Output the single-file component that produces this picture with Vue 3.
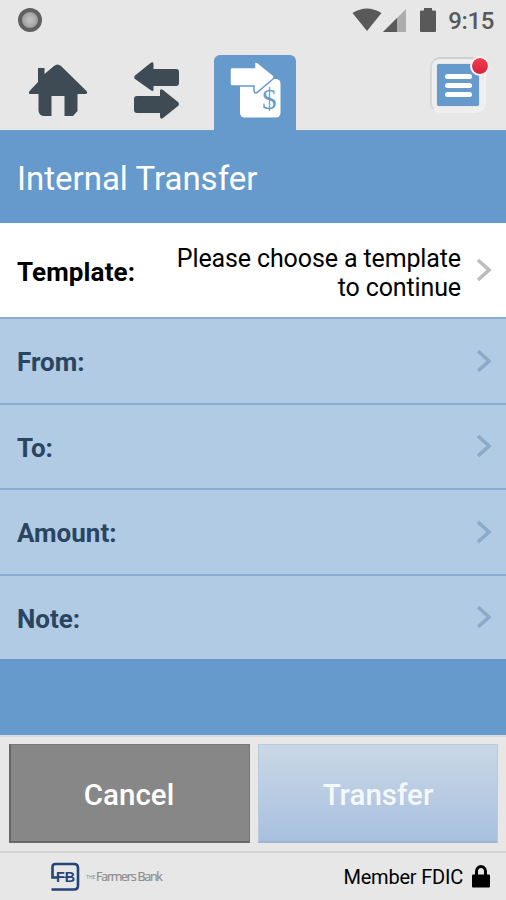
<script setup>
const fields = ['From:', 'To:', 'Amount:', 'Note:']
</script>

<template>
  <main class="screen">
    <header class="status">
      <span class="dot"></span>
      <div class="signals">
        <svg class="wifi" width="30" height="24" viewBox="0 0 30 24"><path d="M.5 5Q15-4 29.500 5L15 23Z" /></svg>
        <svg class="cell" width="24" height="24" viewBox="0 0 24 24"><path d="M23 0V23H0Z" fill="#adadad" /><path d="M14 9V23H0Z" /></svg>
        <svg class="battery" width="16" height="24" viewBox="0 0 16 24"><path d="M4 0H12V2.500H15Q16 2.500 16 3.500V23Q16 24 15 24H1Q0 24 0 23V3.500Q0 2.500 1 2.500H4Z" /></svg>
        <span class="clock">9:15</span>
      </div>
    </header>

    <nav class="tabs">
      <svg class="home" width="60" height="53" viewBox="0 0 60 53"><path d="M10 4H16.500V10L26 2Q29.500-1 33 2L58.500 27Q60.500 30 57 30H49.500V47L45 52H36.500V32H23.500V52H15Q10.500 51 10.500 46V30H2Q-.5 29 2 26.500L10 18Z" /></svg>
      <svg class="swap" width="46" height="58" viewBox="0 0 46 58"><path d="M1 13.500 16.500 1Q19.500-1 19.500 2V7H42Q45 7 45 10V21Q45 24 42 24H19.500V28Q19 30 16.500 28L1 17Q-.5 15 1 13.500Z" /><path d="M3 34H26V29Q26 26 29 28L44 40Q46 42 44 44L29 56Q26 58 26 54V51H3Q0 51 0 48V37Q0 34 3 34Z" /></svg>
      <div class="active">
        <svg width="52" height="58" viewBox="0 0 52 58">
          <rect x="10" y="17" width="40.500" height="38.500" rx="4.500" fill="#fff" />
          <path d="M2 5.500H24.500V1.500Q24.500-1 27.500 .5L43 13Q45 15 43 17L27 30.500Q24 32 24 28V24H2Q0 24 0 22V7.500Q0 5.500 2 5.500Z" fill="#fff" stroke="#6699cc" stroke-width="1.500" />
          <text x="32" y="46.500" class="dollar" textLength="14.500" lengthAdjust="spacingAndGlyphs">$</text>
        </svg>
      </div>
      <div class="menu"><span class="menu-tile"><i></i><i></i><i></i></span><b class="alert"></b></div>
    </nav>

    <h1>Internal Transfer</h1>

    <section>
      <div class="row template">
        <span class="label">Template:</span>
        <span class="choice">Please choose a template<br>to continue</span>
        <svg class="chevron" width="16" height="24" viewBox="0 0 16 24"><path d="M2 2 13 12 2 22" /></svg>
      </div>
      <div v-for="field in fields" :key="field" class="row field">
        <span class="label">{{ field }}</span>
        <svg class="chevron" width="16" height="24" viewBox="0 0 16 24"><path d="M2 2 13 12 2 22" /></svg>
      </div>
    </section>

    <div class="actions">
      <button class="cancel">Cancel</button>
      <button class="transfer">Transfer</button>
    </div>

    <footer>
      <div class="brand">
        <svg width="30" height="30" viewBox="0 0 30 30">
          <path d="M7 15.500H2.500V5Q2.500 2 5.500 2H24Q28 2 28 6V23.500Q28 27.500 24 27.500H1.500" fill="none" stroke="#244477" stroke-width="2.600" />
          <text x="6" y="20" class="monogram" textLength="19" lengthAdjust="spacingAndGlyphs">FB</text>
          <path d="M5 15.300H22" stroke="#244477" stroke-width="1.200" />
        </svg>
        <span class="the">THE</span><span class="bank">Farmers Bank</span>
      </div>
      <div class="fdic">
        <span>Member FDIC</span>
        <svg width="18" height="23" viewBox="0 0 18 23"><path d="M4.500 11V6.500a4.500 5 0 0 1 9 0V11" fill="none" stroke="#000" stroke-width="3" /><rect y="9.500" width="18" height="13" rx="1" /></svg>
      </div>
    </footer>
  </main>
</template>

<style>
body { margin: 0; }
</style>

<style scoped>
* { box-sizing: border-box; }
.screen { width: 506px; height: 900px; overflow: hidden; display: flex; flex-direction: column; background: #6699cc; font-family: Roboto, sans-serif; color: #000; }
.status { height: 41px; flex: none; display: flex; justify-content: space-between; align-items: flex-start; padding: 8px 12px 0 18px; background: #e7e7e7; }
.dot { width: 24px; height: 24px; border-radius: 50%; border: 4px solid #606060; background: radial-gradient(circle, #bdbdbd 20%, #999 75%); }
.signals { display: flex; align-items: flex-start; fill: #595959; }
.wifi { margin-right: -1px; }
.cell { margin: 1px 0 0 2px; }
.battery { margin: 0 0 0 13px; }
.clock { margin-left: 12px; line-height: 26px; font-size: 24px; font-weight: 500; color: #595959; letter-spacing: -.4px; }
.tabs { height: 90px; flex: none; display: flex; align-items: flex-start; padding: 14px 20px 0 28px; background: #e7e7e7; border-bottom: 1px solid #6f9dcc; fill: #3e4b55; }
.home { margin-top: 9px; }
.swap { margin: 7px 0 0 46px; }
.active { width: 82px; height: 76px; margin-left: 34px; padding: 7px 0 0 16px; background: #6699cc; border-radius: 6px 6px 0 0; }
.dollar { font: 29px "Liberation Serif", serif; fill: #6699cc; }
.menu { position: relative; width: 56px; height: 56px; margin: 2px 0 0 auto; padding: 5px; border: 2px solid #f1f1f1; border-top-color: #cfcfcf; border-left-color: #d8d8d8; border-radius: 10px; background: #eee; }
.menu-tile { width: 42px; height: 42px; display: flex; flex-direction: column; justify-content: center; align-items: center; gap: 4px; background: #6699cc; border-radius: 2px; box-shadow: 0 0 1px #8ba6c1; }
.menu-tile i { width: 27px; height: 5px; border-radius: 3px; background: #fff; }
.alert { position: absolute; right: -6px; top: -3px; width: 20px; height: 20px; border: 2px solid #f8f0f1; border-radius: 50%; background: linear-gradient(#f24152, #d91e39) border-box; background-clip: padding-box; }
h1 { margin: 0; height: 92px; flex: none; padding-left: 17px; line-height: 95px; font-size: 33px; font-weight: 400; color: #fff; }
.row { display: flex; align-items: center; padding: 0 14px 0 17px; }
.label { font-size: 26px; font-weight: 700; line-height: 30px; }
.template { height: 94px; background: #fff; }
.template .label { margin-top: 4px; letter-spacing: .12px; }
.choice { margin: 6px 15px 0 auto; text-align: right; font-size: 25px; line-height: 29px; white-space: nowrap; letter-spacing: -.12px; }
.field { height: 85.500px; background: #b1cbe5; border-top: 2px solid #89acd3; }
.field .label { margin-top: 3px; color: #29455f; }
.chevron { fill: none; stroke: #bdbdbd; stroke-width: 3.700; }
.field .chevron { margin-left: auto; stroke: #8cabc9; }
.actions { height: 116px; flex: none; margin-top: auto; display: grid; grid-template-columns: 241px 240px; gap: 8px; padding: 7px 8px 8px 9px; background: #e7e7e7; border-top: 2px solid #d6dbe0; }
button { height: 99px; padding: 3px 0 0; border-radius: 0; font: 500 29.500px Roboto, sans-serif; color: #fff; }
.cancel { background: #878787; border: 1px solid #777; border-left: 2px solid #666; border-bottom: 2px solid #686868; padding-right: 2px; }
.transfer { background: linear-gradient(#c9d8e5, #a8c0df); border: 1px solid #bacbda; border-bottom: 2px solid #9fb4ce; color: #f5f8fb; }
footer { height: 49px; flex: none; display: flex; justify-content: space-between; align-items: center; padding: 0 16px 0 50px; background: #e7e7e7; border-top: 2px solid #d3d3d3; }
.brand { display: flex; align-items: center; color: #8d8d8d; }
.monogram { font: bold 14.500px "Liberation Sans", sans-serif; fill: #244477; }
.the { margin-left: 6px; font-size: 5px; width: 10px; }
.bank { font: 12.500px "Open Sans", sans-serif; letter-spacing: -1.25px; -webkit-text-stroke: .2px #8d8d8d; }
.fdic { display: flex; align-items: center; gap: 9px; font-size: 20px; letter-spacing: -.2px; }
</style>
